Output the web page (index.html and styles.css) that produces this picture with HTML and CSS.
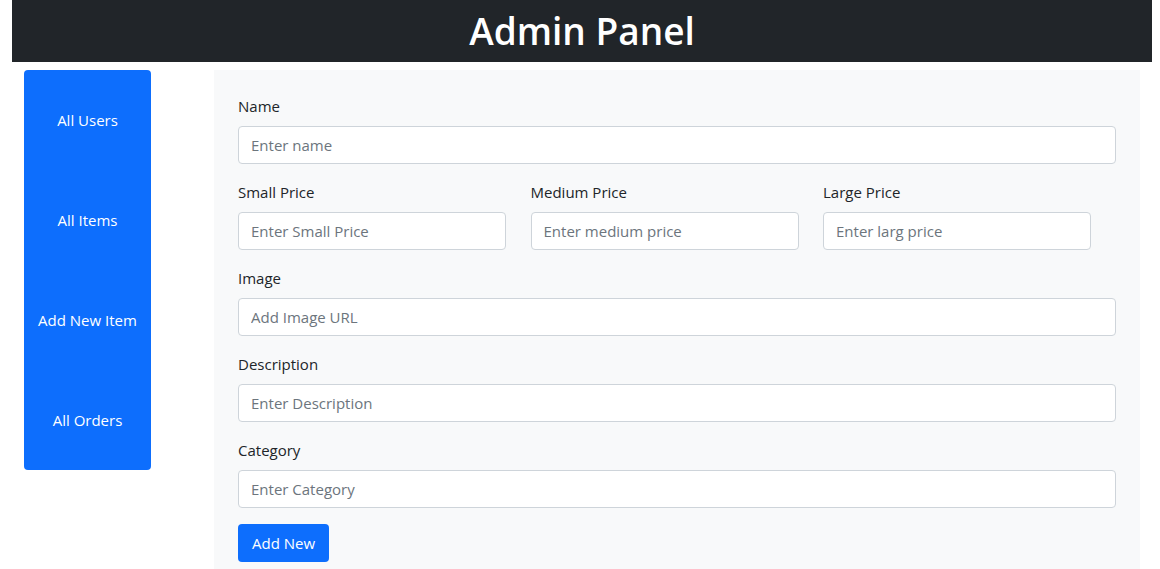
FILE: index.html
```html
<!DOCTYPE html>
<html lang="en">
<head>
<meta charset="utf-8">
<title>Admin Panel</title>
<link rel="stylesheet" href="styles.css">
</head>
<body>
<header class="topbar"><h1 class="title">Admin Panel</h1></header>
<main class="layout">
  <nav class="sidebar">
    <a class="nav-item" href="#">All Users</a>
    <a class="nav-item" href="#">All Items</a>
    <a class="nav-item" href="#">Add New Item</a>
    <a class="nav-item" href="#">All Orders</a>
  </nav>
  <form class="panel">
    <div class="field">
      <label class="label">Name</label>
      <input class="input" type="text" placeholder="Enter name">
    </div>
    <div class="row3">
      <div class="field">
        <label class="label">Small Price</label>
        <input class="input" type="text" placeholder="Enter Small Price">
      </div>
      <div class="field">
        <label class="label">Medium Price</label>
        <input class="input" type="text" placeholder="Enter medium price">
      </div>
      <div class="field">
        <label class="label">Large Price</label>
        <input class="input" type="text" placeholder="Enter larg price">
      </div>
    </div>
    <div class="field">
      <label class="label">Image</label>
      <input class="input" type="text" placeholder="Add Image URL">
    </div>
    <div class="field">
      <label class="label">Description</label>
      <input class="input" type="text" placeholder="Enter Description">
    </div>
    <div class="field">
      <label class="label">Category</label>
      <input class="input" type="text" placeholder="Enter Category">
    </div>
    <button class="btn" type="button">Add New</button>
  </form>
</main>
</body>
</html>
```

FILE: styles.css
```css
* { box-sizing: border-box; }
html, body { margin: 0; padding: 0; background: #fff; }
body {
  font-family: "Open Sans", "Noto Sans", sans-serif;
  font-size: 15px;
  color: #212529;
  overflow: hidden;
}
.topbar {
  margin: 0 8px 0 12px;
  height: 62px;
  background: #212529;
  display: flex;
  align-items: center;
  justify-content: center;
}
.title {
  margin: 0;
  color: #fff;
  font-size: 37px;
  font-weight: 600;
  line-height: 1;
  padding-bottom: 2px;
}
.layout {
  display: flex;
  align-items: flex-start;
  padding: 8px 20px 0 24px;
  gap: 63px;
}
.sidebar {
  width: 127px;
  flex: none;
  background: #0d6efd;
  border-radius: 4px;
  display: flex;
  flex-direction: column;
}
.nav-item {
  height: 100px;
  display: flex;
  align-items: center;
  justify-content: center;
  color: #fff;
  text-decoration: none;
  white-space: nowrap;
  font-size: 15px;
}
.panel {
  flex: 1;
  background: #f8f9fa;
  padding: 24px;
  min-height: 520px;
}
.field {
  display: flex;
  flex-direction: column;
  margin-bottom: 16px;
}
.label {
  line-height: 24px;
  margin-bottom: 8px;
}
.input {
  height: 38px;
  border: 1px solid #ced4da;
  border-radius: 4px;
  background: #fff;
  padding: 0 12px;
  font-family: inherit;
  font-size: 15px;
  color: #212529;
  width: 100%;
}
.input::placeholder { color: #6c757d; opacity: 1; }
.row3 {
  display: grid;
  grid-template-columns: 268px 268px 268px;
  column-gap: 24.5px;
}
.btn {
  height: 38px;
  padding: 0 14px;
  border: none;
  border-radius: 4px;
  background: #0d6efd;
  color: #fff;
  font-family: inherit;
  font-size: 15px;
}
```
